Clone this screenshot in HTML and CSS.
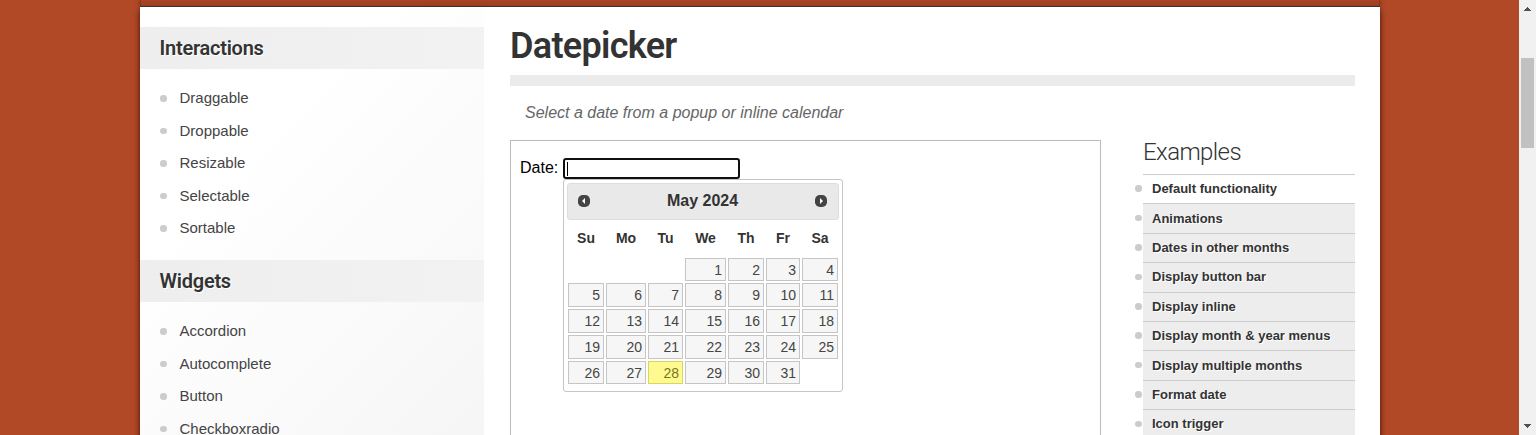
FILE: index.html
```html
<!DOCTYPE html>
<html lang="en">
<head>
<meta charset="utf-8">
<title>Datepicker | jQuery UI</title>
<link rel="stylesheet" href="styles.css">
</head>
<body>
<div class="page">
  <div class="wrap">
    <div class="topbar"></div>
    <div class="container">
      <aside class="sidebar">
        <h3 class="group-title">Interactions</h3>
        <ul class="group-list">
          <li>Draggable</li><li>Droppable</li><li>Resizable</li><li>Selectable</li><li>Sortable</li>
        </ul>
        <h3 class="group-title">Widgets</h3>
        <ul class="group-list">
          <li>Accordion</li><li>Autocomplete</li><li>Button</li><li>Checkboxradio</li>
        </ul>
      </aside>
      <main class="content">
        <h1 class="title">Datepicker</h1>
        <p class="desc">Select a date from a popup or inline calendar</p>
        <div class="columns">
          <section class="demo">
            <label class="label" for="date">Date:</label>
            <div class="field">
              <div class="input" id="date"><span class="caret"></span></div>
              <div class="picker">
                <div class="picker-head">
                  <svg class="nav" viewBox="0 0 12 12"><rect width="12" height="12" rx="4.8" fill="#444"/><path d="M7 3v6L4 6z" fill="#fff"/></svg>
                  <span>May 2024</span>
                  <svg class="nav" viewBox="0 0 12 12"><rect width="12" height="12" rx="4.8" fill="#444"/><path d="M5 3v6L8 6z" fill="#fff"/></svg>
                </div>
                <div class="weekdays"><b>Su</b><b>Mo</b><b>Tu</b><b>We</b><b>Th</b><b>Fr</b><b>Sa</b></div>
                <div class="days">
                  <span class="first">1</span><span>2</span><span>3</span><span>4</span>
                  <span>5</span><span>6</span><span>7</span><span>8</span><span>9</span><span>10</span><span>11</span>
                  <span>12</span><span>13</span><span>14</span><span>15</span><span>16</span><span>17</span><span>18</span>
                  <span>19</span><span>20</span><span>21</span><span>22</span><span>23</span><span>24</span><span>25</span>
                  <span>26</span><span>27</span><span class="today">28</span><span>29</span><span>30</span><span>31</span>
                </div>
              </div>
            </div>
          </section>
          <nav class="examples">
            <h2 class="examples-title">Examples</h2>
            <ul class="examples-list">
              <li class="active">Default functionality</li>
              <li>Animations</li>
              <li>Dates in other months</li>
              <li>Display button bar</li>
              <li>Display inline</li>
              <li>Display month &amp; year menus</li>
              <li>Display multiple months</li>
              <li>Format date</li>
              <li>Icon trigger</li>
            </ul>
          </nav>
        </div>
      </main>
    </div>
  </div>
  <div class="scrollbar">
    <svg class="arrow" viewBox="0 0 7 4" shape-rendering="crispEdges"><path d="M3 0h1v1h1v1h1v1h1v1H0V3h1V2h1V1h1z" fill="#505050"/></svg>
    <div class="thumb"></div>
    <svg class="arrow down" viewBox="0 0 7 4" shape-rendering="crispEdges"><path d="M0 0h7v1H6v1H5v1H4v1H3V3H2V2H1V1H0z" fill="#505050"/></svg>
  </div>
</div>
</body>
</html>
```
FILE: styles.css
```css
* { box-sizing: border-box; }
body {
  margin: 0;
  overflow: hidden;
  background: #b24926;
  color: #333;
  font-family: "Liberation Sans", Arial, sans-serif;
}
h1, h2, h3, p, ul { margin: 0; padding: 0; }
ul { list-style: none; }
.page { display: flex; height: 435px; justify-content: space-between; overflow: hidden; }
.wrap { width: 1240px; margin-left: 140px; display: flex; flex-direction: column; }
.topbar {
  flex: none;
  height: 6px;
  margin: 0 1px;
  background: linear-gradient(#a84425, #a34122);
  box-shadow: 0 0 5px #3b1005;
}
.container {
  flex: 0 0 460px;
  display: flex;
  border-top: 1px solid #333;
  background: #fff;
  box-shadow: 0 4px 6px #3b0d00;
}
.sidebar {
  width: 344px;
  padding-top: 20px;
  background: linear-gradient(135deg, #fff 30%, #f5f5f5 100%);
}
.group-title {
  height: 42px;
  padding-left: 19.5px;
  background: linear-gradient(90deg, #eee, #f2f2f2);
  font: 600 20px/43px Roboto, sans-serif;
  letter-spacing: -0.25px;
  text-shadow: 1px 1px 0 #fff;
}
.group-list { padding: 12.25px 0 16.25px 20px; }
.group-list li {
  display: flex;
  align-items: center;
  gap: 13px;
  height: 32.5px;
  color: #444;
  font-size: 15px;
}
.group-list li::before, .examples-list li::before {
  content: "";
  flex: none;
  width: 6.5px;
  height: 6.5px;
  border-radius: 50%;
  background: #ccc;
}
.group-list li::before { margin-top: 2px; }
.content { width: 845px; margin-left: 26px; }
.title {
  height: 79px;
  border-bottom: 11px solid #ebebeb;
  font: 600 36px/79px Roboto, sans-serif;
  letter-spacing: -0.7px;
}
.desc {
  height: 54px;
  padding-left: 15px;
  color: #666;
  font-size: 16px;
  font-style: italic;
  line-height: 54px;
}
.columns { display: flex; justify-content: space-between; }
.demo {
  display: flex;
  width: 591px;
  height: 340px;
  padding: 17px 9px;
  border: 1px solid #bbb;
  color: #000;
}
.label { width: 43px; font-size: 16px; line-height: 20px; }
.input {
  width: 177px;
  height: 21px;
  padding: 2px 3px;
  border: 2px solid #101010;
  border-radius: 3px;
}
.caret { display: block; width: 1px; height: 14px; margin-left: -1px; background: #000; }
.picker {
  width: 280px;
  height: 213px;
  padding: 3px;
  border: 1px solid #c5c5c5;
  border-radius: 3px;
  color: #333;
}
.picker-head {
  display: flex;
  align-items: center;
  justify-content: space-between;
  height: 37px;
  padding: 0 11px 1px 10px;
  border: 1px solid #ddd;
  border-radius: 3px;
  background: #e9e9e9;
  font-weight: 700;
  font-size: 16px;
}
.nav { width: 12px; height: 12px; }
.weekdays, .days {
  display: grid;
  grid-template-columns: 36px 40px 35px 41px 36px 34px 36px;
  column-gap: 2px;
  margin-left: 1px;
}
.weekdays { height: 38px; font-size: 14px; line-height: 37px; text-align: center; }
.days { grid-template-rows: 23px 24px 24px 24px 23px; row-gap: 2px; color: #454545; font-size: 14px; }
.days span {
  padding-right: 3px;
  border: 1px solid #c5c5c5;
  background: #f6f6f6;
  line-height: 22px;
  text-align: right;
}
.days .first { grid-column: 4; }
.days .today { border-color: #dad55e; background: #fffa90; color: #777620; }
.examples { width: 220px; }
.examples-title {
  height: 34px;
  padding-left: 8px;
  font: 300 24px/24px Roboto, sans-serif;
  letter-spacing: -0.6px;
}
.examples-list li {
  display: flex;
  align-items: center;
  gap: 10.5px;
  height: 29.4px;
  background: linear-gradient(#ccc, #ccc) 8px 0 / 212px 1px no-repeat, linear-gradient(#ededed, #ededed) 8px 0 no-repeat;
  font-size: 13px;
  font-weight: 700;
  text-shadow: 1px 1px 0 #fff;
}
.examples-list .active { background: linear-gradient(#ccc, #ccc) 8px 0 / 212px 1px no-repeat; }
.scrollbar {
  display: flex;
  flex-direction: column;
  align-items: center;
  width: 17px;
  padding: 7px 0;
  background: #f1f1f1;
}
.arrow { width: 7px; height: 4px; }
.thumb { width: 13px; height: 90px; margin-top: 47px; background: #c1c1c1; }
.down { margin-top: auto; }
```
